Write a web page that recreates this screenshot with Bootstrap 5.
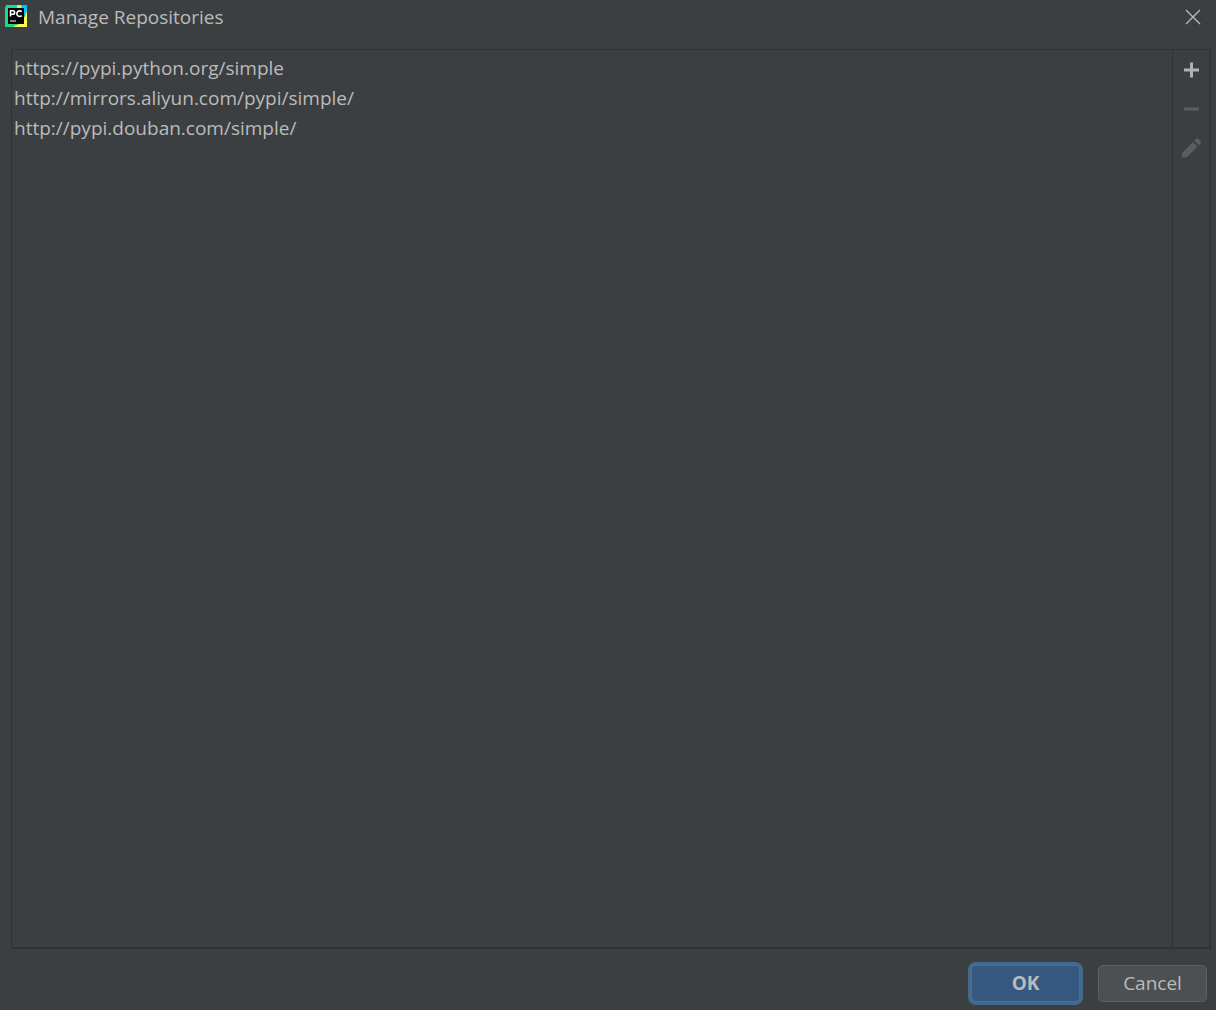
<!DOCTYPE html>
<html lang="en">
<head>
<meta charset="utf-8">
<meta name="viewport" content="width=device-width, initial-scale=1">
<title>Manage Repositories</title>
<link href="https://cdn.jsdelivr.net/npm/bootstrap@5.3.0/dist/css/bootstrap.min.css" rel="stylesheet">
<style>
body { background: #3c3f41; color: #bbbbbb; font-family: "Open Sans", "Noto Sans", sans-serif; font-size: 19px; line-height: 30px; }
.dialog-title { font-size: 19px; line-height: 34px; font-weight: 400; }
.title-bar { height: 34px; padding-left: 5px; gap: 10px; }
.tool-button { height: 39px; padding: 0; border: 0; border-radius: 0; color: #afb1b3; line-height: 1; }
.tool-button:disabled { color: #5b5d5f; opacity: 1; border: 0; }
.close-button { width: 46px; height: 32px; padding: 0; border: 0; line-height: 1; color: #bbbbbb; }
.repo-panel { margin: 15px 5px 0 11px; border: 1px solid #323232; border-right-width: 2px; border-bottom-width: 2px; }
.repo-list { padding: 3px 2px; }
.repo-list .list-group-item { background: transparent; color: #bbbbbb; padding: 0; border: 0; }
.repo-tools { width: 37px; border-left: 1px solid #323232; }
.dialog-actions { padding: 16px 9px 8px; gap: 18px; }
.dialog-button { width: 109px; height: 37px; padding: 0; font-size: 19px; line-height: 35px; border-radius: 5px; color: #bbbbbb; background: #4c5052; border: 1px solid #5e6060; }
.dialog-button:hover { color: #dddddd; background: #53575a; border-color: #5e6060; }
.dialog-button-default { font-weight: 700; background: #365880; border-color: #4c708c; box-shadow: 0 0 0 3px #43698e; }
.dialog-button-default:hover { background: #3c628e; border-color: #4c708c; }
</style>
<script src="https://cdn.jsdelivr.net/npm/bootstrap@5.3.0/dist/js/bootstrap.bundle.min.js" defer></script>
</head>
<body>
<main class="d-flex flex-column vh-100">
  <header class="title-bar d-flex align-items-start">
    <svg class="mt-1" width="23" height="24" viewBox="0 0 23 24" aria-hidden="true">
      <path d="M1 1h14l-3 22H0V4z" fill="#21d789"/>
      <path d="M13 1h9v8l-5 5-4-9z" fill="#07c3f2"/>
      <path d="M12 1l4 0 1 4-5 1z" fill="#c9f26b"/>
      <path d="M22 7v16H8l9-5z" fill="#fcf84a"/>
      <path d="M0 16l6 3 3 4H0z" fill="#21d789"/>
      <path d="M3 4h16v16H3z" fill="#000"/>
      <path d="M5 17h6" stroke="#fff" stroke-width="1"/>
      <path d="M5.500 12.500V6.700h2.400a1.700 1.700 0 0 1 0 3.500H6M16.700 7.700a2.800 2.800 0 1 0 0 3.900" fill="none" stroke="#fff" stroke-width="1.600"/>
    </svg>
    <h1 class="dialog-title mb-0 flex-grow-1">Manage Repositories</h1>
    <button type="button" class="btn close-button" aria-label="Close">
      <svg width="16" height="16" viewBox="0 0 16 16" aria-hidden="true"><path d="M1 1l14 14M15 1L1 15" stroke="currentColor" stroke-width="1.300"/></svg>
    </button>
  </header>
  <section class="repo-panel d-flex flex-grow-1">
    <ul class="repo-list list-group list-group-flush flex-grow-1">
      <li class="list-group-item">https://pypi.python.org/simple</li>
      <li class="list-group-item">http://mirrors.aliyun.com/pypi/simple/</li>
      <li class="list-group-item">http://pypi.douban.com/simple/</li>
    </ul>
    <div class="repo-tools d-flex flex-column">
      <button type="button" class="btn tool-button" aria-label="Add repository">
        <svg width="22" height="22" viewBox="0 0 22 22" aria-hidden="true"><path d="M4 11h15M11.500 3.500v15" stroke="currentColor" stroke-width="3"/></svg>
      </button>
      <button type="button" class="btn tool-button" aria-label="Remove repository" disabled>
        <svg width="22" height="22" viewBox="0 0 22 22" aria-hidden="true"><path d="M4 11h15" stroke="currentColor" stroke-width="3"/></svg>
      </button>
      <button type="button" class="btn tool-button" aria-label="Edit repository" disabled>
        <svg width="22" height="22" viewBox="0 0 22 22" aria-hidden="true"><path d="M2 20.500v-4.500L13 5l4.500 4.500L6.500 20.500zM14.300 3.700l2-2q1-1 2 0l2.500 2.500q1 1 0 2l-2 2z" fill="currentColor"/></svg>
      </button>
    </div>
  </section>
  <footer class="dialog-actions d-flex justify-content-end align-items-center">
    <button type="button" class="btn dialog-button dialog-button-default">OK</button>
    <button type="button" class="btn dialog-button">Cancel</button>
  </footer>
</main>
</body>
</html>
